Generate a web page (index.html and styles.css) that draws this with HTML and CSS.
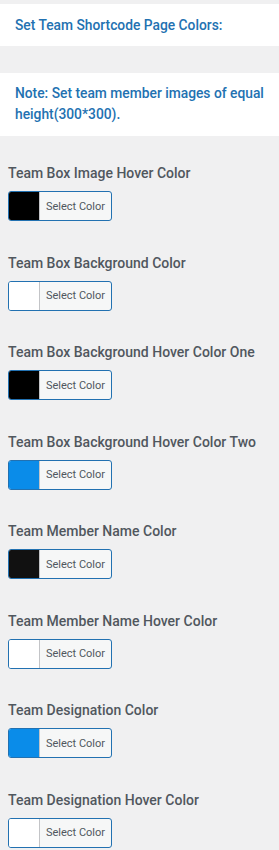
FILE: index.html
```html
<!DOCTYPE html>
<html>
<head>
<meta charset="utf-8">
<link rel="stylesheet" href="styles.css">
</head>
<body>
<div class="page">
  <div class="notice">Set Team Shortcode Page Colors:</div>
  <div class="notice notice-two">Note: Set team member images of equal height(300*300).</div>
  <div class="fields">
    <div class="field">
      <div class="label">Team Box Image Hover Color</div>
      <button class="picker"><span class="swatch" style="background:#000000"></span><span class="picker-text">Select Color</span></button>
    </div>
    <div class="field">
      <div class="label">Team Box Background Color</div>
      <button class="picker"><span class="swatch" style="background:#ffffff"></span><span class="picker-text">Select Color</span></button>
    </div>
    <div class="field">
      <div class="label">Team Box Background Hover Color One</div>
      <button class="picker"><span class="swatch" style="background:#000000"></span><span class="picker-text">Select Color</span></button>
    </div>
    <div class="field">
      <div class="label">Team Box Background Hover Color Two</div>
      <button class="picker"><span class="swatch" style="background:#0a8ce9"></span><span class="picker-text">Select Color</span></button>
    </div>
    <div class="field">
      <div class="label">Team Member Name Color</div>
      <button class="picker"><span class="swatch" style="background:#111111"></span><span class="picker-text">Select Color</span></button>
    </div>
    <div class="field">
      <div class="label">Team Member Name Hover Color</div>
      <button class="picker"><span class="swatch" style="background:#ffffff"></span><span class="picker-text">Select Color</span></button>
    </div>
    <div class="field">
      <div class="label">Team Designation Color</div>
      <button class="picker"><span class="swatch" style="background:#0a8ce9"></span><span class="picker-text">Select Color</span></button>
    </div>
    <div class="field">
      <div class="label">Team Designation Hover Color</div>
      <button class="picker"><span class="swatch" style="background:#ffffff"></span><span class="picker-text">Select Color</span></button>
    </div>
  </div>
</div>
</body>
</html>
```
FILE: styles.css
```css
html, body {
  margin: 0;
  padding: 0;
  background: #f0f0f1;
}
body {
  font-family: Roboto, "Liberation Sans", sans-serif;
}
.page {
  padding-top: 4px;
}
.notice {
  background: #ffffff;
  color: #2271b1;
  font-size: 13.8px;
  font-weight: 500;
  line-height: 20px;
  padding: 11px 10px 11px 15px;
}
.notice-two {
  margin-top: 27px;
  line-height: 21px;
  padding-top: 10px;
  padding-bottom: 11px;
}
.fields {
  padding: 27px 8px 0 8px;
}
.field {
  display: flex;
  flex-direction: column;
  align-items: flex-start;
  margin-bottom: 31.5px;
}
.label {
  color: #50575e;
  font-size: 14px;
  font-weight: 500;
  line-height: 20px;
  margin-bottom: 8px;
}
.picker {
  display: flex;
  align-items: stretch;
  width: 104px;
  height: 30px;
  padding: 0;
  border: 1px solid #2271b1;
  border-radius: 3px;
  background: #f6f7f7;
  overflow: hidden;
  font-family: Roboto, "Liberation Sans", sans-serif;
  cursor: pointer;
}
.swatch {
  width: 30px;
  flex: none;
  border-right: 1px solid #c3c4c7;
}
.picker-text {
  flex: 1;
  display: flex;
  align-items: center;
  justify-content: center;
  color: #50575e;
  font-size: 11px;
}
```
